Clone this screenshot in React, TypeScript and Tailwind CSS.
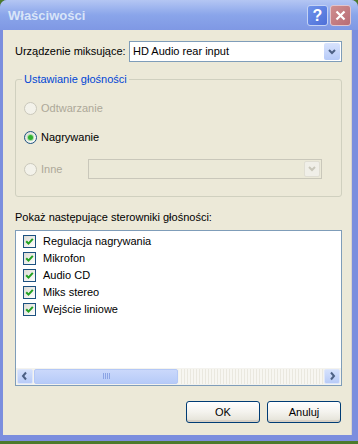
import React from "react";

const font = "font-['Tahoma','Liberation_Sans',sans-serif]";

const Chevron = ({ dir = "down", disabled = false }: { dir?: "down" | "left" | "right"; disabled?: boolean }) => {
  const d =
    dir === "down" ? "M2 3 L5 6 L8 3" : dir === "left" ? "M6 1.5 L3 5 L6 8.5" : "M4 1.5 L7 5 L4 8.5";
  return (
    <svg width="10" height="10" viewBox="0 0 10 10">
      <path d={d} fill="none" stroke={disabled ? "#c9c7ba" : "#4d6185"} strokeWidth="2" />
    </svg>
  );
};

const Radio = ({ checked = false, disabled = false, label }: { checked?: boolean; disabled?: boolean; label: string }) => (
  <div className="flex items-center gap-[4px]">
    <span
      className={`flex h-[13px] w-[13px] items-center justify-center rounded-full border ${
        disabled ? "border-[#cac8bb] bg-[#f3f2ea]" : "border-[#1c5180] bg-gradient-to-br from-[#dcdbd4] to-white"
      }`}
    >
      {checked && <span className="h-[5px] w-[5px] rounded-full bg-[#30b030] shadow-[0_0_0_1px_#a8dea8]" />}
    </span>
    <span className={disabled ? "text-[#aca899]" : "text-black"}>{label}</span>
  </div>
);

const Check = ({ label }: { label: string }) => (
  <div className="flex h-[17px] items-center gap-[7px]">
    <span className="flex h-[13px] w-[13px] items-center justify-center border border-[#1c5180] bg-gradient-to-br from-[#dcdbd4] to-white">
      <svg width="9" height="9" viewBox="0 0 9 9">
        <path d="M1.2 4.2 L3.5 6.6 L7.8 1.8" fill="none" stroke="#21a121" strokeWidth="2" />
      </svg>
    </span>
    <span>{label}</span>
  </div>
);

const XpButton = ({ label }: { label: string }) => (
  <button className="flex h-[22px] w-[74px] items-center justify-center rounded-[3px] border border-[#003c74] bg-gradient-to-b from-white via-[#f4f3ee] to-[#e3e1d6] text-black shadow-[inset_0_-2px_0_#d6d0c5]">
    {label}
  </button>
);

export default function App() {
  return (
    <div className={`h-[444px] w-[358px] overflow-hidden bg-[#4d7a2c] ${font} text-[11px] leading-[13px]`}>
      <div className="flex h-[441px] w-[358px] flex-col rounded-t-[7px] bg-[#7b8ede]">
        {/* title bar */}
        <div className="flex h-[30px] items-center rounded-t-[7px] bg-gradient-to-b from-[#b4c6f3] via-[#8aa5ea] to-[#7f98e4] pl-[8px] pr-[7px]">
          <span className="font-['Trebuchet_MS','Liberation_Sans',sans-serif] text-[13px] font-bold text-[#d8e4f8]">
            Właściwości
          </span>
          <div className="ml-auto flex gap-[2px]">
            <span className="flex h-[21px] w-[21px] items-center justify-center rounded-[3px] border border-[#c4d2f4] bg-gradient-to-br from-[#6f93ea] to-[#4e6fd8] text-[16px] font-bold text-white">
              ?
            </span>
            <span className="flex h-[21px] w-[21px] items-center justify-center rounded-[3px] border border-[#e0c4cc] bg-gradient-to-br from-[#cf8e8e] to-[#b86c76]">
              <svg width="11" height="11" viewBox="0 0 11 11">
                <path d="M1.5 1.5 L9.5 9.5 M9.5 1.5 L1.5 9.5" stroke="white" strokeWidth="2.2" />
              </svg>
            </span>
          </div>
        </div>

        {/* client */}
        <div className="ml-[3px] mr-[6px] mb-[6px] flex flex-1 flex-col border-r border-[#d8d4ce] bg-[#ece9d8] pl-[12px] pr-[9px] pt-[11px]">
          <div className="flex items-center">
            <span className="w-[114px]">Urządzenie miksujące:</span>
            <div className="flex h-[21px] flex-1 items-center border border-[#7f9db9] bg-white pl-[3px] pr-[1px]">
              <span className="flex-1">HD Audio rear input</span>
              <span className="flex h-[17px] w-[16px] items-center justify-center rounded-[2px] bg-gradient-to-b from-[#d8e3fd] to-[#b6caf8]">
                <Chevron />
              </span>
            </div>
          </div>

          {/* group */}
          <div className="relative mt-[17px] h-[118px] rounded-[3px] border border-[#d0d0bf]">
            <span className="absolute -top-[7px] left-[6px] bg-[#ece9d8] px-[2px] text-[#0046d5]">Ustawianie głośności</span>
            <div className="flex flex-col pl-[8px] pt-[22px]">
              <Radio disabled label="Odtwarzanie" />
              <div className="mt-[16px]">
                <Radio checked label="Nagrywanie" />
              </div>
              <div className="mt-[15px] flex items-center">
                <div className="w-[64px]">
                  <Radio disabled label="Inne" />
                </div>
                <div className="flex h-[20px] w-[234px] items-center justify-end border border-[#c9c7ba] bg-[#ebe9d8] pr-[1px]">
                  <span className="flex h-[16px] w-[16px] items-center justify-center rounded-[2px] border border-[#e0ded3] bg-[#f0efe8]">
                    <Chevron disabled />
                  </span>
                </div>
              </div>
            </div>
          </div>

          <span className="mt-[14px]">Pokaż następujące sterowniki głośności:</span>

          {/* list */}
          <div className="mt-[6px] flex h-[156px] flex-col border border-[#7f9db9] bg-white">
            <div className="flex flex-1 flex-col pl-[7px] pt-[2px]">
              <Check label="Regulacja nagrywania" />
              <Check label="Mikrofon" />
              <Check label="Audio CD" />
              <Check label="Miks stereo" />
              <Check label="Wejście liniowe" />
            </div>
            <div className="flex h-[17px] items-center gap-[1px] bg-[#f4f3ee] px-[1px] pb-[1px]">
              <span className="flex h-[15px] w-[16px] items-center justify-center rounded-[2px] border border-[#dde6fb] bg-gradient-to-b from-[#d5e1fc] to-[#b8cbf7]">
                <Chevron dir="left" />
              </span>
              <span className="flex h-[15px] w-[144px] items-center justify-center rounded-[2px] border border-[#b4c8f6] bg-gradient-to-b from-[#cad8fb] to-[#b7cbf8]">
                <span className="flex gap-[1px]">
                  {[0, 1, 2, 3].map((i) => (
                    <span key={i} className="h-[6px] w-[1px] bg-[#8ca4e4]" />
                  ))}
                </span>
              </span>
              <span className="h-[15px] flex-1 bg-[repeating-linear-gradient(90deg,#f7f6f1_0px,#f7f6f1_2px,#eae8df_2px,#eae8df_3px)]" />
              <span className="flex h-[15px] w-[16px] items-center justify-center rounded-[2px] border border-[#dde6fb] bg-gradient-to-b from-[#d5e1fc] to-[#b8cbf7]">
                <Chevron dir="right" />
              </span>
            </div>
          </div>

          <div className="mt-[15px] flex justify-end gap-[7px] pr-[1px]">
            <XpButton label="OK" />
            <XpButton label="Anuluj" />
          </div>
        </div>
      </div>
    </div>
  );
}
